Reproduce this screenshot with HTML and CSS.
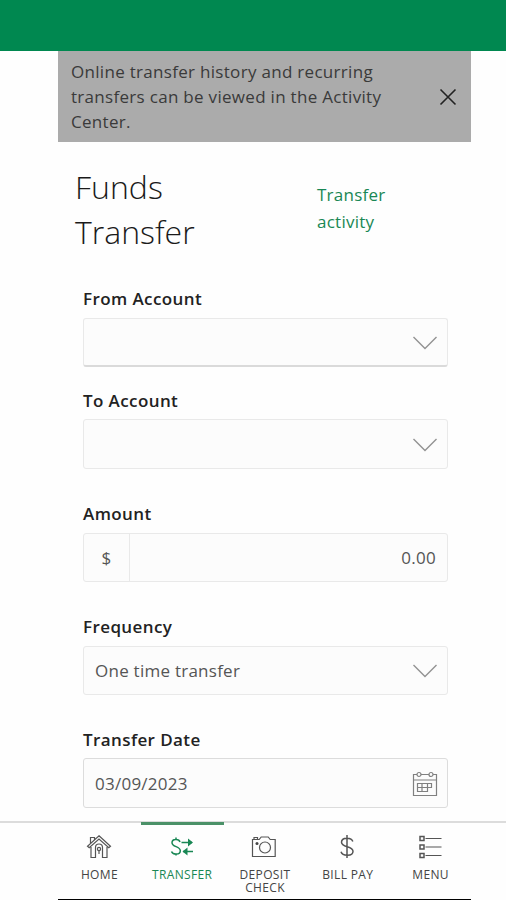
FILE: index.html
```html
<!DOCTYPE html>
<html lang="en">
<head>
<meta charset="utf-8">
<title>Funds Transfer</title>
<link rel="stylesheet" href="styles.css">
</head>
<body>
<header class="topbar"></header>
<main class="page">
  <section class="notice">
    <p class="notice-text">Online transfer history and recurring<br>transfers can be viewed in the Activity<br>Center.</p>
    <svg class="close" width="18" height="18" viewBox="0 0 18 18"><path d="M1.500 1.500l15 15M16.500 1.500l-15 15"/></svg>
  </section>
  <div class="heading">
    <h1 class="title">Funds<br>Transfer</h1>
    <a class="activity">Transfer<br>activity</a>
  </div>
  <form class="form">
    <div class="field from">
      <label class="label">From Account</label>
      <div class="box box-strong"><svg class="chevron" width="26" height="16" viewBox="0 0 26 16"><path d="M1.500 2L13 13.500 24.500 2"/></svg></div>
    </div>
    <div class="field to">
      <label class="label">To Account</label>
      <div class="box"><svg class="chevron" width="26" height="16" viewBox="0 0 26 16"><path d="M1.500 2L13 13.500 24.500 2"/></svg></div>
    </div>
    <div class="field amount">
      <label class="label">Amount</label>
      <div class="box box-amount"><span class="currency">$</span><span class="value">0.00</span></div>
    </div>
    <div class="field frequency">
      <label class="label">Frequency</label>
      <div class="box box-short"><span class="text">One time transfer</span><svg class="chevron" width="26" height="16" viewBox="0 0 26 16"><path d="M1.500 2L13 13.500 24.500 2"/></svg></div>
    </div>
    <div class="field date">
      <label class="label">Transfer Date</label>
      <div class="box box-date"><span class="text">03/09/2023</span>
        <svg class="calendar" width="26" height="26" viewBox="0 0 26 26"><path d="M5 3.500H1.500v21h23v-21H21M9 3.500h8M1.500 9h23"/><circle cx="7" cy="3.500" r="2"/><circle cx="19" cy="3.500" r="2"/><path d="M5.500 12.500h14v4h-4v4h-10zM5.500 16.500h10v-4M10 12.500v8"/></svg>
      </div>
    </div>
  </form>
</main>
<nav class="nav">
  <a class="tab">
    <svg class="icon" width="26" height="26" viewBox="0 0 26 26"><path d="M4.500 9.500V3.500h4v2.300M13 1.800L24.500 12.200l-1.700 1.600L13 5 3.200 13.800l-1.700-1.600zM5 13v10.500h4.500V13.500a3.500 3.500 0 0 1 7 0v10H21V13"/><path d="M13 17v3"/><circle cx="13" cy="15" r="1.600"/></svg>
    <span class="tab-label">HOME</span>
  </a>
  <a class="tab active">
    <svg class="icon" width="26" height="26" viewBox="0 0 26 26"><path class="bold" d="M11 8C10 4.500 3 4.700 3 8.700c0 4.600 8.300 3.200 8.300 8 0 4.300-7.500 4.500-8.800.8M7 3.500v2M7 19.500v2M12.500 8.500H23M14 17.500h10"/><path class="arrowhead" d="M19 4.500l5 4-5 4zM18.500 13.500l-5 4 5 4z"/></svg>
    <span class="tab-label">TRANSFER</span>
  </a>
  <a class="tab">
    <svg class="icon" width="26" height="26" viewBox="0 0 26 26"><path d="M1.500 22.500v-17h6.700L10.200 3h7l2 2.500h5v17zM3 5V3.500h3.500V5"/><circle cx="14" cy="13.500" r="5.500"/><circle class="dot" cx="6" cy="9.500" r="1.500"/></svg>
    <span class="tab-label"><span class="line">DEPOSIT</span><span class="line">CHECK</span></span>
  </a>
  <a class="tab">
    <svg class="icon" width="26" height="26" viewBox="0 0 26 26"><path class="bold" d="M13 1v23M18.800 7.500C17.500 3 7.500 3 7.500 8.200c0 5.500 11.500 3.500 11.500 9 0 5.300-10.500 5.300-12 .5"/></svg>
    <span class="tab-label">BILL PAY</span>
  </a>
  <a class="tab">
    <svg class="icon" width="26" height="26" viewBox="0 0 26 26"><path class="bold" d="M3 2.500h4v4H3zM3 11h4v4H3zM3 19.500h4v4H3z"/><path d="M8.500 4.500h16M8.500 13h16M8.500 21.500h16"/></svg>
    <span class="tab-label">MENU</span>
  </a>
</nav>
<footer class="edge"></footer>
</body>
</html>
```

FILE: styles.css
```css
* { box-sizing: border-box; }
body {
  margin: 0;
  height: 900px;
  display: flex;
  flex-direction: column;
  overflow: hidden;
  background: #fefefe;
  color: #222;
  font-family: "Open Sans", sans-serif;
  white-space: nowrap;
}
svg { fill: none; stroke: #555; stroke-width: 1.2; flex: none; }
.topbar { height: 51px; flex: none; background: #008850; }
.page { width: 413px; height: 770px; flex: none; margin-left: 58px; }
.notice {
  height: 91px;
  display: flex;
  justify-content: space-between;
  padding: 8px 14px 0 13px;
  background: #ababab;
}
.notice-text { margin: 0; font-size: 17px; line-height: 25px; color: #3a3a3a; letter-spacing: 0.3px; }
.close { margin-top: 29px; stroke: #222; stroke-width: 1.6; }
.heading { display: flex; height: 146px; padding: 22px 0 0 17px; }
.title { margin: 0; width: 242px; font-size: 32px; font-weight: 340; line-height: 45px; letter-spacing: 0; color: #1a1a1a; }
.activity { margin-top: 17px; font-size: 17px; line-height: 27px; letter-spacing: 0.25px; color: #198754; }
.form { width: 365px; margin-left: 25px; }
.field { display: flex; flex-direction: column; }
.from { height: 102px; }
.to { height: 113px; }
.amount { height: 113px; }
.frequency { height: 113px; }
.label { height: 29px; font-size: 17px; font-weight: 550; line-height: 22px; letter-spacing: 0.4px; }
.box {
  height: 50px;
  display: flex;
  align-items: center;
  justify-content: space-between;
  padding: 0 9px 0 11px;
  border: 1px solid #e9e9e9;
  border-radius: 3px;
  background: #fcfcfc;
  font-size: 17px;
  letter-spacing: 0.25px;
  color: #555;
}
.box-strong { height: 49px; margin-top: 1px; border-bottom: 2px solid #dadada; }
.box-short { height: 49px; margin-top: 1px; }
.box-date { border-color: #dcdcdc; }
.box-amount { height: 49px; padding: 0 11px 0 0; margin-top: 1px; }
.currency {
  width: 46px;
  height: 47px;
  border-right: 1px solid #e9e9e9;
  line-height: 47px;
  text-align: center;
}
.chevron { margin: 1px 0 0 auto; stroke: #929292; stroke-width: 1.4; }
.calendar { margin-top: 2px; stroke: #808080; }
.nav {
  height: 78px;
  flex: none;
  display: grid;
  grid-template-columns: repeat(5, 82.8px);
  padding-left: 58px;
  border-top: 2px solid #dcdcdc;
  background: #fefefe;
}
.tab {
  display: flex;
  flex-direction: column;
  align-items: center;
  padding-top: 11px;
  color: #444;
}
.active {
  margin-top: -1px;
  padding-top: 9px;
  border-top: 3px solid #4b9168;
  color: #198754;
}
.active svg { stroke: #198754; }
.icon { margin-right: 1px; }
.bold { stroke-width: 1.5; }
.dot { fill: #444; stroke: none; }
.arrowhead { fill: #198754; stroke: none; }
.tab-label {
  margin-top: 8px;
  font-size: 12px;
  line-height: 13px;
  letter-spacing: 0.35px;
  text-align: center;
}
.line { display: block; height: 13px; }
.edge { width: 413px; height: 1px; margin-left: 58px; flex: none; background: #000; }
```
